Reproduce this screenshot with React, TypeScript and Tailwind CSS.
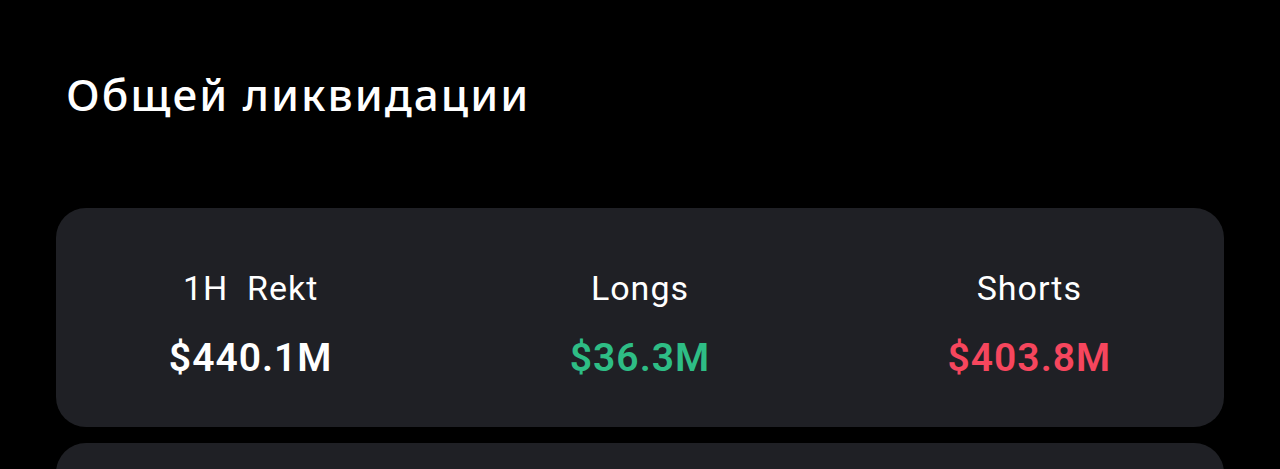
export default function App() {
  const stats = [
    { label: '1H  Rekt', value: '$440.1M', color: 'text-white' },
    { label: 'Longs', value: '$36.3M', color: 'text-[#2ebd85]' },
    { label: 'Shorts', value: '$403.8M', color: 'text-[#f6465d]' },
  ];

  return (
    <div className="min-h-[469px] h-[469px] overflow-hidden bg-black px-[56px] font-['Roboto',sans-serif]">
      <h1 className="pl-[10px] pt-[66px] text-[44px] leading-[56px] font-medium tracking-[2px] text-white font-['Noto_Sans',sans-serif]">
        Общей ликвидации
      </h1>

      <div className="mt-[86px] grid h-[219px] grid-cols-3 rounded-[30px] bg-[#1f2025]">
        {stats.map((s) => (
          <div key={s.value} className="flex flex-col items-center pt-[60px]">
            <span className="whitespace-pre text-[34px] leading-[40px] tracking-[1px] text-white">{s.label}</span>
            <span className={`mt-[28px] text-[39px] leading-[44px] font-semibold tracking-[1px] ${s.color}`}>
              {s.value}
            </span>
          </div>
        ))}
      </div>

      <div className="mt-[16px] h-[100px] rounded-[30px] bg-[#1f2025]" />
    </div>
  );
}
